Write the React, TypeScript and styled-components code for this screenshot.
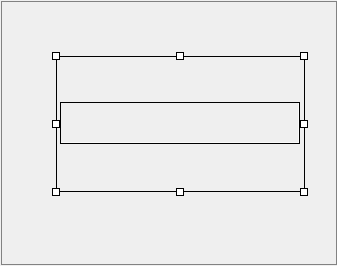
import React from "react";
import styled, { createGlobalStyle } from "styled-components";

const Global = createGlobalStyle`
  html, body { margin: 0; padding: 0; background: #f0f0f0; }
  body { font-family: "Liberation Sans", Arial, sans-serif; }
`;

const Page = styled.div`
  width: 337px;
  height: 266px;
  padding: 1px 0 0 1px;
  box-sizing: border-box;
  background: #f0f0f0;
`;

const Surface = styled.div`
  width: 336px;
  height: 264px;
  box-sizing: border-box;
  border: 1px solid #828282;
  background: #efefef;
  padding: 54px 0 0 54px;
`;

const Selection = styled.div`
  position: relative;
  width: 249px;
  height: 136px;
  box-sizing: border-box;
  border: 1px solid #000;
  padding: 45px 4px 0 3px;
`;

const Field = styled.div`
  width: 240px;
  height: 42px;
  box-sizing: border-box;
  border: 1px solid #000;
  background: #efefef;
  box-shadow: inset -1px -1px 0 #fafafa;
`;

type HProps = { $x: "l" | "c" | "r"; $y: "t" | "m" | "b" };

const Handle = styled.div<HProps>`
  position: absolute;
  width: 8px;
  height: 8px;
  box-sizing: border-box;
  border: 1px solid #000;
  background: #fff;
  ${(p) =>
    p.$x === "l" ? "left: -5px;" : p.$x === "r" ? "right: -4px;" : "left: calc(50% - 4.5px);"}
  ${(p) =>
    p.$y === "t" ? "top: -5px;" : p.$y === "b" ? "bottom: -5px;" : "top: calc(50% - 4px);"}
`;

const handles: HProps[] = [
  { $x: "l", $y: "t" },
  { $x: "c", $y: "t" },
  { $x: "r", $y: "t" },
  { $x: "l", $y: "m" },
  { $x: "r", $y: "m" },
  { $x: "l", $y: "b" },
  { $x: "c", $y: "b" },
  { $x: "r", $y: "b" },
];

export default function App() {
  return (
    <>
      <Global />
      <Page>
        <Surface>
          <Selection>
            <Field />
            {handles.map((h, i) => (
              <Handle key={i} $x={h.$x} $y={h.$y} />
            ))}
          </Selection>
        </Surface>
      </Page>
    </>
  );
}
